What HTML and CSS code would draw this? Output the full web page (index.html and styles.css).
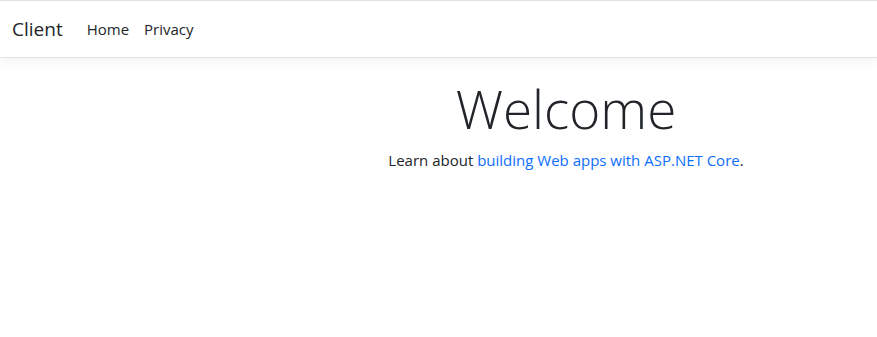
FILE: index.html
```html
<!DOCTYPE html>
<html lang="en">

<head>
    <meta charset="UTF-8">
    <meta name="viewport" content="width=device-width, initial-scale=1.0">
    <title>Home Page - Client</title>
    <link rel="stylesheet" href="styles.css">
</head>

<body>
    <header>
        <nav class="navbar">
            <div class="container-fluid">
                <a class="navbar-brand" href="#">Client</a>
                <ul class="navbar-nav">
                    <li class="nav-item"><a class="nav-link" href="#">Home</a></li>
                    <li class="nav-item"><a class="nav-link" href="#">Privacy</a></li>
                </ul>
            </div>
        </nav>
    </header>
    <div class="container">
        <main role="main" class="pb-3">
            <div class="text-center">
                <h1 class="display-4">Welcome</h1>
                <p>Learn about <a href="#">building Web apps with ASP.NET Core</a>.</p>
            </div>
        </main>
    </div>
</body>

</html>
```

FILE: styles.css
```css
body {
    font-family: 'Open Sans', 'Noto Sans', sans-serif;
    font-size: 16px;
    line-height: 1.5;
    color: #212529;
    background-color: #fff;
    margin: 0;
    padding: 0;
    border-top: 1px solid #dee2e6;
}

a {
    color: #0d6efd;
    text-decoration: none;
}

.navbar {
    background-color: #fff;
    border-bottom: 1px solid #dee2e6;
    box-shadow: 0 .25rem .75rem rgba(0, 0, 0, .05);
    padding: 8px 0;
    margin-bottom: 16px;
}

.container-fluid {
    display: flex;
    align-items: center;
    padding: 0 12px;
}

.navbar-brand {
    color: #212529;
    font-size: 19px;
    line-height: 30px;
    padding: 5px 0;
    margin-right: 16px;
}

.navbar-nav {
    display: flex;
    list-style: none;
    margin: 0;
    padding: 0;
}

.nav-link {
    display: block;
    color: #212529;
    padding: 8px;
    font-size: 15px;
}

.nav-item:last-child .nav-link {
    padding-left: 7px;
}

/* page is wider than the shot, content center sits at 566px */
.container {
    padding: 3px 0 0 255px;
}

.pb-3 {
    padding-bottom: 16px;
}

.text-center {
    text-align: center;
}

.display-4 {
    font-size: 53px;
    font-weight: 300;
    line-height: 1.2;
    margin: 0 0 8px;
}

p {
    margin: 0 0 16px;
    font-size: 15px;
}
```
